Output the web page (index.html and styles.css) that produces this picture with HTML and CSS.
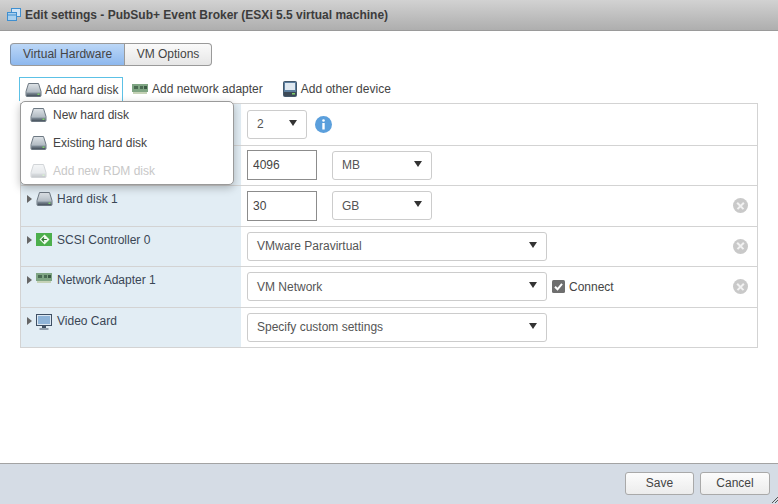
FILE: index.html
```html
<!DOCTYPE html>
<html lang="en">
<head>
<meta charset="utf-8">
<title>Edit settings</title>
<link rel="stylesheet" href="styles.css">
</head>
<body>
<svg class="defs" width="0" height="0" aria-hidden="true">
  <defs>
    <linearGradient id="dk" x1="0" y1="0" x2="0" y2="1"><stop offset="0" stop-color="#dfe4e8"/><stop offset="1" stop-color="#9aa5af"/></linearGradient>
    <linearGradient id="bd" x1="0" y1="0" x2="0" y2="1"><stop offset="0" stop-color="#8a96a1"/><stop offset="1" stop-color="#47525d"/></linearGradient>
    <symbol id="disk" viewBox="0 0 16 14">
      <path d="M3 .5h10l2.500 8v4a1 1 0 0 1-1 1h-13a1 1 0 0 1-1-1v-4z" fill="url(#dk)" stroke="#6d7882"/>
      <rect x="1" y="9.500" width="14" height="3.500" fill="url(#bd)"/>
      <rect x="12" y="10.500" width="2" height="1.500" fill="#7fd06a"/>
    </symbol>
    <symbol id="nic" viewBox="0 0 16 10">
      <rect y="0" width="16" height="8" fill="#7fa583"/>
      <rect x="2" y="2" width="4" height="3" fill="#4a6b52"/>
      <rect x="8" y="2" width="3" height="3" fill="#4a6b52"/>
      <rect x="12" y="2" width="3" height="3" fill="#3c5a45"/>
      <path d="M1 8h14v2H1z" fill="#c5d2b6"/>
    </symbol>
  </defs>
</svg>
<div class="dialog">
  <header class="titlebar">
    <svg class="ticon" width="16" height="16" viewBox="0 0 16 16"><rect x="5.500" y="1.500" width="9" height="8" fill="#cfe3f5" stroke="#3f8fd0"/><rect x="1.500" y="5.500" width="9" height="8" fill="#a9d0ef" stroke="#3f8fd0"/><path d="M1.500 8h9M5.500 1.500v4" stroke="#3f8fd0"/></svg>
    <span>Edit settings - PubSub+ Event Broker (ESXi 5.5 virtual machine)</span>
  </header>
  <main class="body">
    <div class="tabs">
      <div class="tab active">Virtual Hardware</div>
      <div class="tab">VM Options</div>
    </div>
    <div class="toolbar">
      <div class="tool focused"><svg width="17" height="14"><use href="#disk"/></svg>Add hard disk</div>
      <div class="tool"><svg width="16" height="10"><use href="#nic"/></svg>Add network adapter</div>
      <div class="tool"><svg width="14" height="16" viewBox="0 0 14 16"><rect x=".5" y=".5" width="13" height="15" rx="1" fill="#5d7f9f" stroke="#44586b"/><rect x="2" y="2" width="10" height="7" fill="#dfe8f0"/><rect x="1" y="11" width="12" height="4" fill="#3d4a57"/><rect x="9" y="12" width="3" height="1.500" fill="#7fd06a"/></svg>Add other device</div>
    </div>
    <div class="hw">
      <div class="row">
        <div class="lab"></div>
        <div class="val"><div class="sel w60"><span>2</span><i class="tri"></i></div>
          <svg class="info" width="17" height="17" viewBox="0 0 17 17"><circle cx="8.500" cy="8.500" r="8.500" fill="#5b9fdc"/><circle cx="8.500" cy="4.500" r="1.300" fill="#fff"/><rect x="7.300" y="7" width="2.400" height="6.500" fill="#fff"/></svg></div>
      </div>
      <div class="row">
        <div class="lab"></div>
        <div class="val"><input class="num" value="4096" aria-label="Memory"><div class="sel w100"><span>MB</span><i class="tri"></i></div></div>
      </div>
      <div class="row">
        <div class="lab"><i class="arrow"></i><svg width="17" height="14"><use href="#disk"/></svg><span>Hard disk 1</span></div>
        <div class="val"><input class="num" value="30" aria-label="Disk size"><div class="sel w100"><span>GB</span><i class="tri"></i></div><i class="x"></i></div>
      </div>
      <div class="row">
        <div class="lab"><i class="arrow"></i><svg class="pad" width="16" height="13" viewBox="0 0 16 13"><rect width="16" height="13" fill="#4caf4c"/><path d="M8.500 1.500L13.500 6.500 8.500 11.500 3.500 6.500z" fill="#f2faf0"/><path d="M10.800 6.500H6M8 4.500L6 6.500l2 2" fill="none" stroke="#2c7a2c" stroke-width="1.200"/></svg><span>SCSI Controller 0</span></div>
        <div class="val"><div class="sel w300"><span>VMware Paravirtual</span><i class="tri"></i></div><i class="x"></i></div>
      </div>
      <div class="row">
        <div class="lab"><i class="arrow"></i><svg class="pad" width="16" height="10"><use href="#nic"/></svg><span>Network Adapter 1</span></div>
        <div class="val"><div class="sel w300"><span>VM Network</span><i class="tri"></i></div>
          <label class="conn"><svg width="13" height="13" viewBox="0 0 13 13"><rect width="13" height="13" rx="1.500" fill="#6e6e6e"/><path d="M3 6.800l2.500 2.500L10 3.800" fill="none" stroke="#fff" stroke-width="2"/></svg>Connect</label><i class="x"></i></div>
      </div>
      <div class="row">
        <div class="lab"><i class="arrow"></i><svg class="pad" width="16" height="16" viewBox="0 0 16 16"><rect x=".5" y=".5" width="15" height="11" fill="#dbe7f2" stroke="#3f5064"/><rect x="2" y="2" width="12" height="8" fill="#8fb4d8"/><path d="M6 12h4v2H6zM3.500 14.500h9v1h-9z" fill="#3f5064"/></svg><span>Video Card</span></div>
        <div class="val"><div class="sel w300"><span>Specify custom settings</span><i class="tri"></i></div></div>
      </div>
      <div class="menu">
        <div class="mi"><svg width="17" height="14"><use href="#disk"/></svg>New hard disk</div>
        <div class="mi"><svg width="17" height="14"><use href="#disk"/></svg>Existing hard disk</div>
        <div class="mi off"><svg width="17" height="14"><use href="#disk"/></svg>Add new RDM disk</div>
      </div>
    </div>
  </main>
  <footer class="foot">
    <button class="btn">Save</button>
    <button class="btn wide">Cancel</button>
    <svg class="grip" width="6" height="6" viewBox="0 0 6 6"><path d="M0 6L6 0M3 6L6 3" stroke="#555" stroke-width="1"/></svg>
  </footer>
</div>
</body>
</html>
```
FILE: styles.css
```css
* { box-sizing: border-box; }
html, body { margin: 0; height: 100%; }
body { font-family: "Liberation Sans", Arial, sans-serif; font-size: 12px; color: #333; background: #fff; overflow: hidden; }
.defs { position: absolute; }
.dialog { position: relative; width: 778px; height: 504px; display: flex; flex-direction: column; }
.titlebar { height: 31px; flex: none; display: flex; align-items: center; gap: 3px; padding-left: 6px; background: linear-gradient(#d2d2d2, #aeaeae); border-bottom: 1px solid #9a9a9a; font-weight: bold; color: #3c3c3c; }
.body { flex: 1; padding: 12px 20px 0 10px; display: flex; flex-direction: column; }
.tabs { display: flex; width: 202px; height: 23px; }
.tab { height: 23px; line-height: 20px; text-align: center; border: 1px solid #9a9a9a; background: linear-gradient(#fafafa, #e6e6e6); color: #444; width: 87px; border-radius: 0 4px 4px 0; border-left: 0; }
.tab.active { width: 115px; background: linear-gradient(#bcd7f7, #8db8ee); border-left: 1px solid #7b8fa8; border-radius: 4px 0 0 4px; }
.toolbar { display: flex; align-items: center; height: 24px; margin: 11px 0 2px 9px; gap: 9px; }
.tool { height: 24px; display: flex; align-items: center; gap: 4px; color: #444; white-space: nowrap; }
.tool + .tool + .tool { margin-left: 11px; }
.tool.focused { width: 104px; padding-left: 5px; gap: 3px; border: 1px solid #5cc1e6; border-bottom: 0; }
.hw { position: relative; margin-left: 10px; border: 1px solid #d3d3d3; width: 738px; }
.row { display: flex; height: 40.500px; border-top: 1px solid #d3d3d3; }
.row:first-child { border-top: 0; }
.lab { width: 220px; flex: none; background: #e2edf4; padding: 6px 0 0 6px; display: flex; align-items: flex-start; gap: 5px; color: #3a4654; }
.lab svg { flex: none; margin-left: -1px; }
.lab .pad { margin-right: 1px; }
.lab span { line-height: 14px; white-space: nowrap; margin-left: -1px; }
.arrow { width: 0; height: 0; margin-top: 3px; border-left: 5px solid #666; border-top: 4px solid transparent; border-bottom: 4px solid transparent; }
.val { position: relative; flex: 1; display: flex; align-items: center; padding-left: 6px; }
.sel { height: 29px; border: 1px solid #ccc; border-radius: 3px; display: flex; align-items: center; justify-content: space-between; padding: 0 9px; color: #555; background: #fff; }
.w60 { width: 60px; }
.w100 { width: 100px; margin-left: 15px; }
.w300 { width: 300px; }
.tri { width: 0; height: 0; border-left: 4px solid transparent; border-right: 4px solid transparent; border-top: 6px solid #333; margin-bottom: 3px; }
.info { margin-left: 8px; }
.num { width: 70px; height: 30px; border: 1px solid #8c8c8c; padding: 0 5px; font: 12px "Liberation Sans", Arial, sans-serif; color: #444; border-radius: 0; }
.conn { display: flex; align-items: center; gap: 4px; margin-left: 5px; color: #444; }
.x { position: absolute; right: 9px; top: 12px; width: 15px; height: 15px; border-radius: 50%; background: #c9c9c9; }
.x::before, .x::after { content: ""; position: absolute; left: 3px; top: 6.750px; width: 9px; height: 1.500px; background: #f2f2f2; transform: rotate(45deg); }
.x::after { transform: rotate(-45deg); }
.menu { position: absolute; left: -1px; top: -3px; width: 214px; height: 84px; background: #fff; border: 1px solid #9a9a9a; border-radius: 5px; box-shadow: 0 3px 8px rgba(0,0,0,.25); }
.mi { height: 28px; display: flex; align-items: center; gap: 6px; padding: 0 0 2px 9px; color: #444; }
.mi.off { color: #c8c8c8; }
.mi.off svg { opacity: .3; }
.foot { height: 41px; flex: none; background: #d5dce5; border-top: 1px solid #a3a3a3; display: flex; justify-content: flex-end; align-items: center; gap: 6px; padding: 0 8px 2px 0; }
.btn { width: 69px; height: 23px; border: 1px solid #a9a9a9; border-radius: 3px; background: linear-gradient(#fcfcfc, #ececec); font: 12px "Liberation Sans", Arial, sans-serif; color: #444; padding: 0; }
.btn.wide { width: 70px; }
.grip { position: absolute; right: 0; bottom: 1px; }
```
